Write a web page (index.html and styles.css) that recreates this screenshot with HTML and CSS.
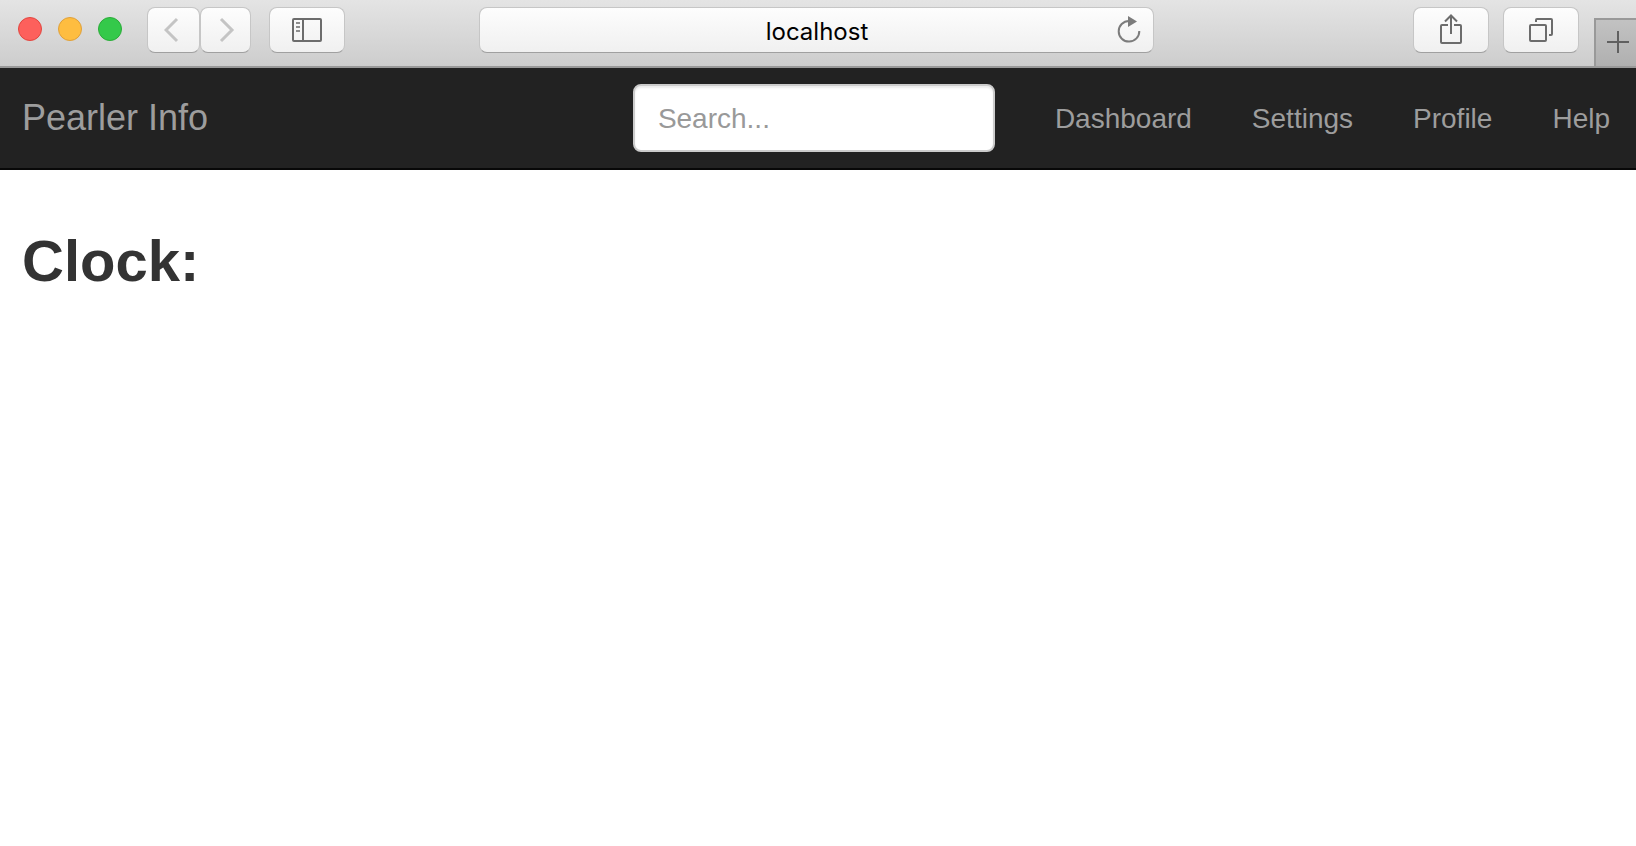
FILE: index.html
```html
<!DOCTYPE html>
<html lang="en">
<head>
<meta charset="utf-8">
<meta name="viewport" content="width=device-width, initial-scale=1">
<title>Pearler Info</title>
<link rel="stylesheet" href="styles.css">
</head>
<body>
<header class="toolbar">
  <div class="toolbar-left">
    <div class="lights">
      <button class="light light-close" aria-label="Close"></button>
      <button class="light light-minimize" aria-label="Minimize"></button>
      <button class="light light-zoom" aria-label="Zoom"></button>
    </div>
    <div class="history">
      <button class="tool tool-back" aria-label="Back">
        <svg width="20" height="28" viewBox="0 0 20 28" fill="none" stroke="#c4c4c4" stroke-width="3"><path d="M13 3 2 14l11 11"/></svg>
      </button>
      <button class="tool tool-forward" aria-label="Forward">
        <svg width="20" height="28" viewBox="0 0 20 28" fill="none" stroke="#c4c4c4" stroke-width="3"><path d="M5 3l11 11L5 25"/></svg>
      </button>
    </div>
    <button class="tool" aria-label="Show sidebar">
      <svg width="30" height="24" viewBox="0 0 30 24" fill="none" stroke="#6c6c6c" stroke-width="2"><rect x="1" y="1" width="28" height="22" rx="1"/><path d="M11 1v22"/><path stroke="#8e8e8e" d="M4 5h4M4 9h4M4 13h4"/></svg>
    </button>
  </div>
  <div class="address">
    <input class="address-input" type="text" aria-label="Address" value="localhost">
    <button class="reload" aria-label="Reload">
      <svg width="24" height="28" viewBox="0 0 24 28"><path d="M12 5a10.300 10.300 0 1 0 10.300 10" fill="none" stroke="#7c7c7c" stroke-width="2"/><path d="M11 0v11l9-5.500z" fill="#7c7c7c"/></svg>
    </button>
  </div>
  <div class="toolbar-right">
    <button class="tool" aria-label="Share">
      <svg width="24" height="32" viewBox="0 0 24 32" fill="none" stroke="#6c6c6c" stroke-width="2"><path d="M9 11H3a1 1 0 0 0-1 1v16a1 1 0 0 0 1 1h18a1 1 0 0 0 1-1V12a1 1 0 0 0-1-1h-6"/><path d="M12 20V1.500M6 7.500l6-6 6 6"/></svg>
    </button>
    <button class="tool tool-tabs" aria-label="Show all tabs">
      <svg width="24" height="24" viewBox="0 0 24 24" fill="none" stroke="#6c6c6c" stroke-width="2"><rect x="1" y="7" width="16" height="16" rx="1"/><path d="M7 4V2a1 1 0 0 1 1-1h14a1 1 0 0 1 1 1v14a1 1 0 0 1-1 1h-2"/></svg>
    </button>
    <button class="new-tab" aria-label="New tab">
      <svg width="22" height="22" viewBox="0 0 22 22" fill="none" stroke="#606060" stroke-width="2"><path d="M11 0v22M0 11h22"/></svg>
    </button>
  </div>
</header>
<nav class="navbar">
  <a class="brand" href="#">Pearler Info</a>
  <form class="search">
    <input class="search-input" type="text" placeholder="Search..." aria-label="Search">
  </form>
  <ul class="links">
    <li><a class="link" href="#">Dashboard</a></li>
    <li><a class="link" href="#">Settings</a></li>
    <li><a class="link" href="#">Profile</a></li>
    <li><a class="link" href="#">Help</a></li>
  </ul>
</nav>
<main class="content">
  <h2 class="heading">Clock:</h2>
</main>
</body>
</html>
```
FILE: styles.css
```css
* { box-sizing: border-box; }

body {
  margin: 0;
  background: #fff;
  color: #333;
  font-family: "Helvetica Neue", "Liberation Sans", Arial, sans-serif;
}

button { margin: 0; padding: 0; border: 0; background: none; }
svg { display: block; }

/* Browser toolbar */
.toolbar {
  display: grid;
  grid-template-columns: 1fr minmax(0, 679px) 1fr;
  height: 68px;
  background: linear-gradient(#e4e4e4, #cdcdcd);
  border-bottom: 2px solid #999;
}

.toolbar-left {
  display: flex;
  align-items: flex-start;
  padding: 7px 0 0 18px;
}

.lights {
  display: flex;
  gap: 16px;
  margin-right: 25px;
  padding-top: 10px;
}

.light {
  width: 24px;
  height: 24px;
  border: 1px solid;
  border-radius: 50%;
}
.light-close { background: #fd605c; border-color: #e2463f; }
.light-minimize { background: #febd40; border-color: #dfa03a; }
.light-zoom { background: #34c94a; border-color: #2aac38; }

.history { display: flex; margin-right: 18px; }

.tool {
  display: flex;
  align-items: center;
  justify-content: center;
  width: 76px;
  height: 46px;
  background: linear-gradient(#fdfdfd, #f0f0f0);
  border: 1px solid #c6c6c6;
  border-bottom-color: #a0a0a0;
  border-radius: 8px;
}
.tool-back { width: 53px; }
.tool-forward { width: 51px; }

.address {
  display: flex;
  align-items: center;
  height: 46px;
  margin: 7px 4px 0 0;
  padding: 0 12px;
  background: linear-gradient(#fdfdfd, #f0f0f0);
  border: 1px solid #c6c6c6;
  border-bottom-color: #a0a0a0;
  border-radius: 8px;
}
.address-input {
  flex: 1;
  min-width: 0;
  padding: 3px 0 0 26px;
  border: 0;
  outline: 0;
  background: none;
  color: #000;
  font: 24px/30px Inter, sans-serif;
  text-align: center;
}

.toolbar-right {
  display: flex;
  justify-content: flex-end;
  align-items: flex-start;
  gap: 14px;
  padding-top: 7px;
}
.tool-tabs { margin-right: 1px; }
.new-tab {
  display: flex;
  align-items: center;
  justify-content: center;
  width: 42px;
  height: 48px;
  margin-top: 11px;
  padding: 0 0 2px 3px;
  background: linear-gradient(#c2c2c2, #b0b0b0);
  border: 2px solid #999;
  border-width: 2px 0 0 2px;
}

/* Site navigation */
.navbar {
  display: flex;
  align-items: center;
  min-height: 102px;
  padding-left: 22px;
  background: #222;
  border-bottom: 2px solid #080808;
}
.brand {
  margin-right: auto;
  color: #9d9d9d;
  font-size: 36px;
  line-height: 40px;
  text-decoration: none;
}
.search { margin-right: 30px; }
.search-input {
  display: block;
  width: 362px;
  height: 68px;
  padding: 14px 23px 12px;
  background: #fff;
  border: 2px solid #ccc;
  border-radius: 8px;
  box-shadow: inset 0 2px 2px rgba(0, 0, 0, .075);
  color: #555;
  font: inherit;
  font-size: 28px;
  line-height: 38px;
}
.search-input::placeholder { color: #999; opacity: 1; }
.links {
  display: flex;
  margin: 0;
  padding: 0;
  list-style: none;
}
.link {
  display: block;
  padding: 31px 30px 29px;
  color: #9d9d9d;
  font-size: 28px;
  line-height: 40px;
  text-decoration: none;
}
.links li:last-child .link { padding-right: 26px; }

/* Page */
.content { padding: 58px 22px; }
.heading {
  margin: 0;
  font-size: 58px;
  font-weight: 700;
  line-height: 66px;
}
```
